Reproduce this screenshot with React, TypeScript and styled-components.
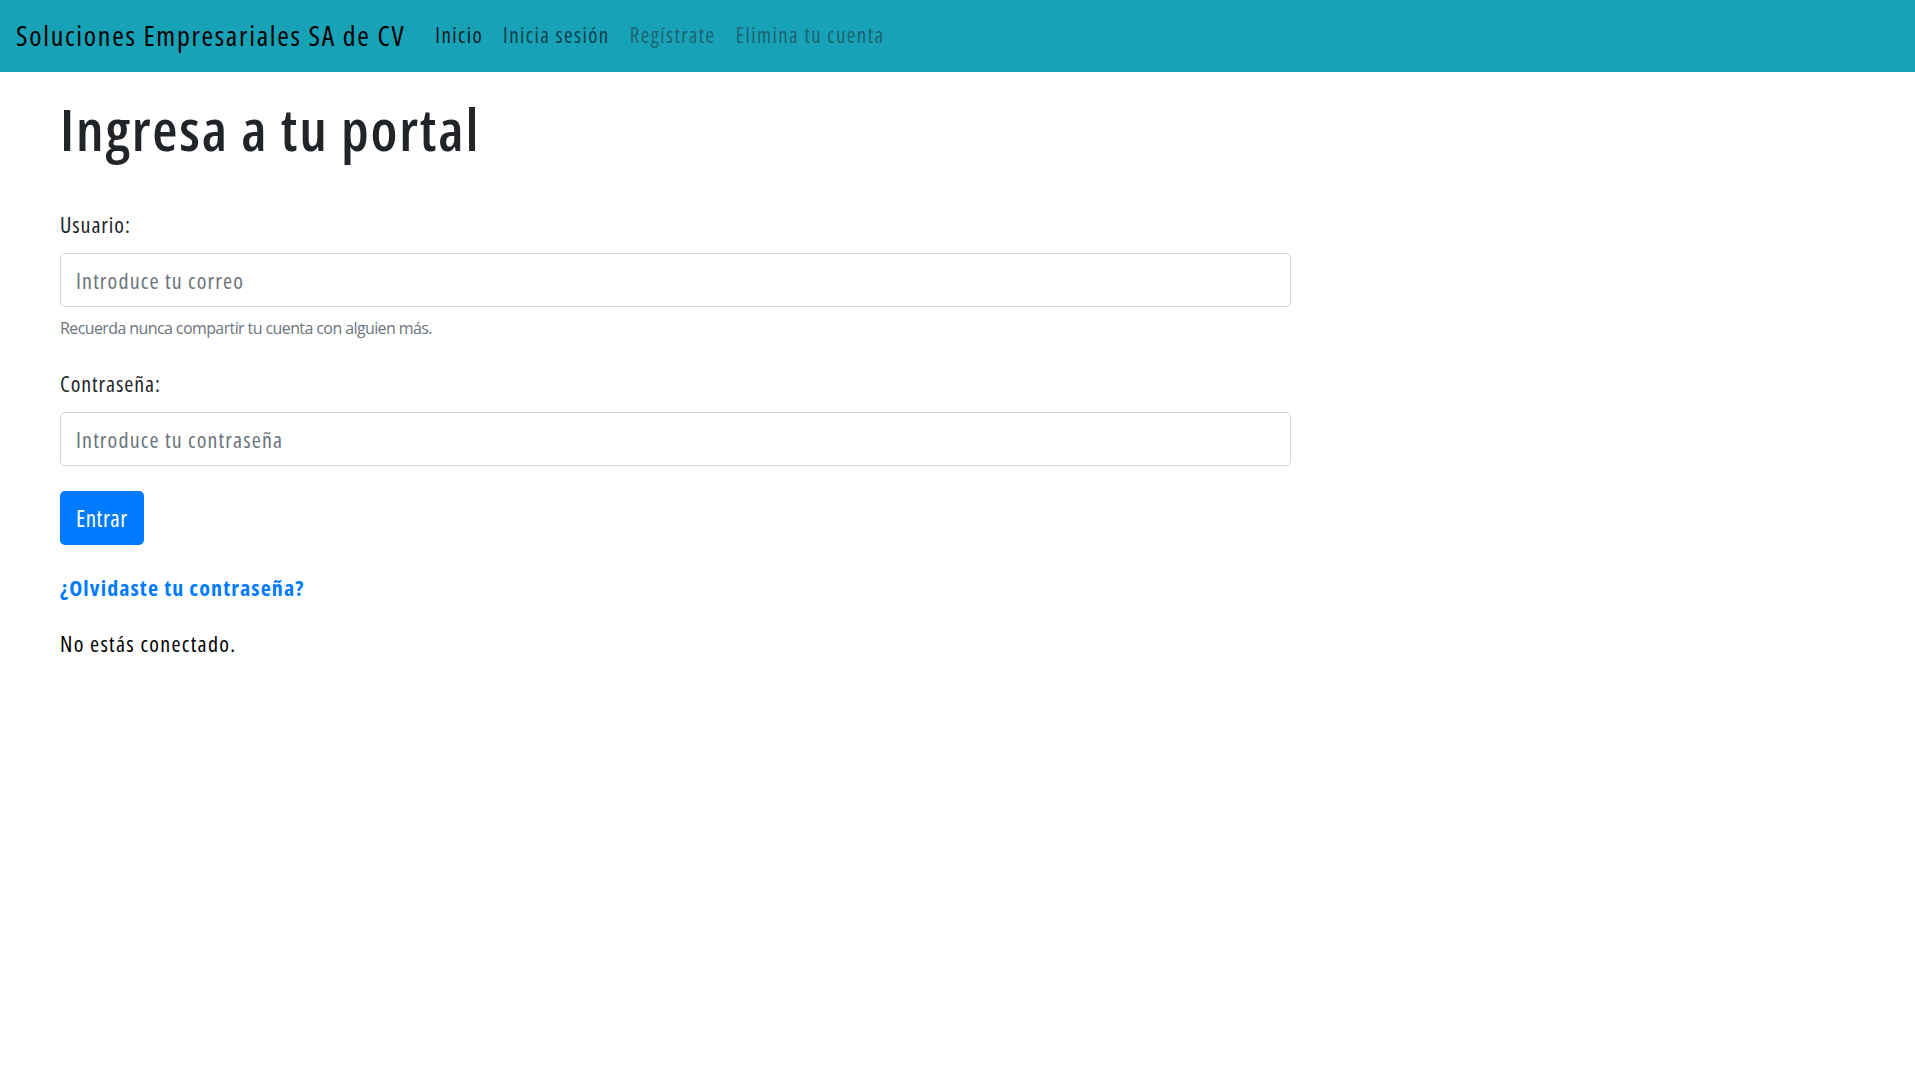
import React from "react";
import styled, { createGlobalStyle } from "styled-components";

// Open Sans only snaps to its 75% / 100% widths, so letter-spacing does the fine tuning
const GlobalStyle = createGlobalStyle`
  body {
    margin: 0;
    background: #fff;
    font-family: "Open Sans", "Noto Sans", sans-serif;
    font-stretch: 75%;
    color: #212529;
  }
  * { box-sizing: border-box; }
`;

const Navbar = styled.nav`
  height: 72px;
  background: #17a2b8;
  display: flex;
  align-items: center;
  padding: 0 16px 3px;
`;
const Brand = styled.a`
  font-size: 28px;
  letter-spacing: 1.7px;
  color: #000;
  margin-right: 30px;
  text-decoration: none;
`;
const NavLinks = styled.div`
  display: flex;
  gap: 20px;
`;
const NavLink = styled.a<{ $tone: "active" | "normal" | "muted" }>`
  font-size: 21px;
  letter-spacing: 1.4px;
  text-decoration: none;
  color: ${({ $tone }) =>
    $tone === "active" ? "#061b20" : $tone === "normal" ? "#0d3f48" : "#1c6470"};
`;

const Main = styled.main`
  padding: 0 60px;
`;
const Title = styled.h1`
  font-size: 58px;
  font-weight: 600;
  letter-spacing: 1.8px;
  line-height: 1.2;
  margin: 22px 0 44px;
`;
const Form = styled.form`
  width: 1231px;
`;
const Group = styled.div`
  margin-bottom: 28px;
`;
const Label = styled.label`
  display: block;
  font-size: 22px;
  letter-spacing: 0.9px;
  line-height: 1.5;
  margin-bottom: 12px;
  color: #212529;
`;
const Input = styled.input`
  display: block;
  width: 100%;
  height: 54px;
  padding: 0 15px;
  font-family: inherit;
  font-stretch: 75%;
  font-size: 22px;
  letter-spacing: 1.15px;
  border: 1px solid #ced4da;
  border-radius: 5px;
  color: #495057;
  &::placeholder { color: #6c757d; }
`;
const Help = styled.small`
  display: block;
  margin-top: 10px;
  font-size: 16px;
  font-stretch: 100%;
  letter-spacing: -0.6px;
  color: #6c757d;
`;
const Button = styled.button`
  height: 54px;
  margin-top: -3px;
  padding: 0 16px;
  font-family: inherit;
  font-stretch: 75%;
  font-size: 23px;
  letter-spacing: 0.5px;
  color: #fff;
  background: #007bff;
  border: none;
  border-radius: 5px;
`;
const Forgot = styled.a`
  display: block;
  margin-top: 27px;
  font-size: 22px;
  font-weight: 700;
  letter-spacing: 1.1px;
  color: #007bff;
  text-decoration: none;
`;
const Status = styled.p`
  font-size: 22px;
  letter-spacing: 1.3px;
  margin: 26px 0 0;
  color: #000;
`;

export default function App() {
  return (
    <>
      <GlobalStyle />
      <Navbar>
        <Brand href="#">Soluciones Empresariales SA de CV</Brand>
        <NavLinks>
          <NavLink $tone="active" href="#">Inicio</NavLink>
          <NavLink $tone="normal" href="#">Inicia sesión</NavLink>
          <NavLink $tone="muted" href="#">Regístrate</NavLink>
          <NavLink $tone="muted" href="#">Elimina tu cuenta</NavLink>
        </NavLinks>
      </Navbar>
      <Main>
        <Title>Ingresa a tu portal</Title>
        <Form onSubmit={(e) => e.preventDefault()}>
          <Group>
            <Label>Usuario:</Label>
            <Input type="email" placeholder="Introduce tu correo" />
            <Help>Recuerda nunca compartir tu cuenta con alguien más.</Help>
          </Group>
          <Group>
            <Label>Contraseña:</Label>
            <Input type="password" placeholder="Introduce tu contraseña" />
          </Group>
          <Button type="submit">Entrar</Button>
        </Form>
        <Forgot href="#">¿Olvidaste tu contraseña?</Forgot>
        <Status>No estás conectado.</Status>
      </Main>
    </>
  );
}
